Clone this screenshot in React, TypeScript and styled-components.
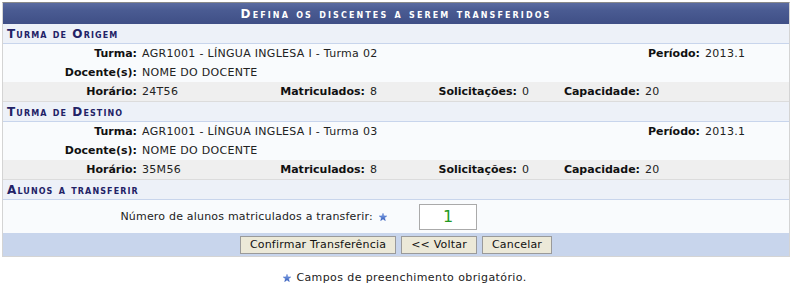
import React from "react";
import styled, { createGlobalStyle } from "styled-components";

const GlobalStyle = createGlobalStyle`
  html, body { margin: 0; padding: 0; background: #ffffff; }
  body {
    font-family: "DejaVu Sans", Verdana, sans-serif;
    font-size: 11px;
    color: #222222;
  }
`;

const Form = styled.div`
  margin: 2px 4px 0 2px;
  border: 1px solid #d4d4d4;
  border-top-color: #8a8a8a;
  background: #f9fbfd;
`;

const Caption = styled.div`
  height: 21px;
  display: flex;
  align-items: center;
  justify-content: center;
  background: linear-gradient(#5a6ba1 0%, #4a5b92 35%, #3f4f86 100%);
  color: #ffffff;
  font-weight: bold;
  font-variant: small-caps;
  letter-spacing: 2.1px;
  font-size: 12px;
`;

const SubHeader = styled.div`
  height: 19px;
  display: flex;
  align-items: center;
  padding-left: 4px;
  background: #edf1f8;
  border-bottom: 1px solid #c8d5ec;
  color: #222266;
  font-weight: bold;
  font-variant: small-caps;
  letter-spacing: 1.1px;
  font-size: 12px;
`;

const Row = styled.div<{ $cols: string; $gray?: boolean }>`
  display: grid;
  grid-template-columns: ${(p) => p.$cols};
  height: 19px;
  align-items: center;
  background: ${(p) => (p.$gray ? "#efefef" : "#f9fbfd")};
  border-bottom: ${(p) => (p.$gray ? "1px solid #dcdcdc" : "none")};
`;

const Label = styled.div`
  text-align: right;
  font-weight: bold;
  padding-right: 2px;
  white-space: nowrap;
  color: #111111;
`;

const Value = styled.div`
  padding-left: 3px;
  white-space: nowrap;
  color: #222222;
  letter-spacing: 0.3px;
`;

const InputRow = styled.div`
  display: grid;
  grid-template-columns: 393px 1fr;
  height: 33px;
  align-items: center;
  background: #f9fbfd;
`;

const InputLabel = styled.div`
  display: flex;
  justify-content: flex-end;
  align-items: center;
  gap: 6px;
  padding-right: 9px;
  white-space: nowrap;
  letter-spacing: 0.2px;
`;

const CountBox = styled.div`
  margin-left: 23px;
  width: 56px;
  height: 24px;
  border: 1px solid #aaaaaa;
  background: #ffffff;
  color: #229922;
  font-size: 16px;
  display: flex;
  align-items: center;
  justify-content: center;
`;

const Footer = styled.div`
  height: 23px;
  background: #c8d5ec;
  display: flex;
  justify-content: center;
  align-items: center;
  gap: 5px;
`;

const Button = styled.button`
  font-family: "DejaVu Sans", Verdana, sans-serif;
  font-size: 11px;
  letter-spacing: 0.2px;
  color: #111111;
  background: #ece9d8;
  border: 1px solid #9a9a9a;
  height: 18px;
  padding: 0 9px;
  margin: 0;
  line-height: 14px;
`;

const Note = styled.div`
  margin: 14px 0 0 16px;
  display: flex;
  justify-content: center;
  align-items: center;
  gap: 5px;
  font-size: 11px;
  letter-spacing: 0.4px;
  color: #222222;
`;

const Star: React.FC = () => (
  <svg width="8" height="8" viewBox="0 0 10 10">
    <defs>
      <linearGradient id="sg" x1="0" y1="0" x2="0" y2="1">
        <stop offset="0" stopColor="#8fb0ee" />
        <stop offset="1" stopColor="#2c56b8" />
      </linearGradient>
    </defs>
    <polygon
      points="5,0.3 6.3,3.6 9.8,3.7 7,5.9 8,9.6 5,7.5 2,9.6 3,5.9 0.2,3.7 3.7,3.6"
      fill="url(#sg)"
      stroke="#3a62c2"
      strokeWidth="0.5"
    />
  </svg>
);

const turmaCols = "136px 1fr auto 87px";
const docCols = "136px 1fr";
const horCols = "136px 114px 114px 46px 106px 29px 94px 1fr";

type Turma = { nome: string; horario: string };

const TurmaSection: React.FC<{ title: string; t: Turma }> = ({ title, t }) => (
  <>
    <SubHeader>{title}</SubHeader>
    <Row $cols={turmaCols}>
      <Label>Turma:</Label>
      <Value>{t.nome}</Value>
      <Label>Período:</Label>
      <Value>2013.1</Value>
    </Row>
    <Row $cols={docCols}>
      <Label>Docente(s):</Label>
      <Value>NOME DO DOCENTE</Value>
    </Row>
    <Row $cols={horCols} $gray>
      <Label>Horário:</Label>
      <Value>{t.horario}</Value>
      <Label>Matriculados:</Label>
      <Value>8</Value>
      <Label>Solicitações:</Label>
      <Value>0</Value>
      <Label>Capacidade:</Label>
      <Value>20</Value>
    </Row>
  </>
);

export default function App() {
  return (
    <>
      <GlobalStyle />
      <Form>
        <Caption>Defina os discentes a serem transferidos</Caption>
        <TurmaSection
          title="Turma de Origem"
          t={{ nome: "AGR1001 - LÍNGUA INGLESA I - Turma 02", horario: "24T56" }}
        />
        <TurmaSection
          title="Turma de Destino"
          t={{ nome: "AGR1001 - LÍNGUA INGLESA I - Turma 03", horario: "35M56" }}
        />
        <SubHeader>Alunos a transferir</SubHeader>
        <InputRow>
          <InputLabel>
            <span>Número de alunos matriculados a transferir:</span>
            <Star />
          </InputLabel>
          <div>
            <CountBox>1</CountBox>
          </div>
        </InputRow>
        <Footer>
          <Button>Confirmar Transferência</Button>
          <Button>&lt;&lt; Voltar</Button>
          <Button>Cancelar</Button>
        </Footer>
      </Form>
      <Note>
        <Star />
        <span>Campos de preenchimento obrigatório.</span>
      </Note>
    </>
  );
}
